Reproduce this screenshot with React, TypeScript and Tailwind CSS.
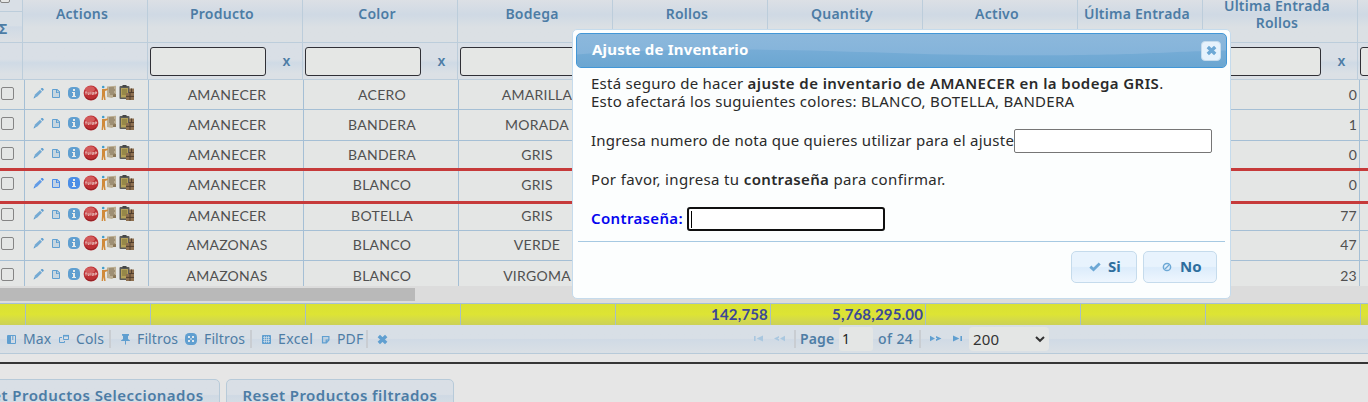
import type { ReactNode } from "react";

type IconName =
  | "pencil" | "doc" | "info" | "stop" | "note" | "stock" | "max" | "cols" | "pin"
  | "clear" | "grid" | "pdf" | "close" | "first" | "prev" | "next" | "last" | "check" | "ban";

const glyphs: Record<IconName, ReactNode> = {
  pencil: (
    <g fill="currentColor">
      <path d="M3 11.5 4 8.6 9 3.8 11 5.8 6 10.8Z" opacity=".85" />
      <path d="m9.6 3.1 1-1c.3-.3.7-.3 1 0l1 1c.3.3.3.7 0 1l-1 1Z" />
      <path d="M3.3 10.3 2.5 12.5 4.7 11.7Z" />
    </g>
  ),
  doc: (
    <g>
      <path d="M3.5 3.5h4.5l2.5 2.5v5.5h-7Z" fill="currentColor" fillOpacity=".22" stroke="currentColor" />
      <path d="M7 3h1.2L11 5.8V7H7Z" fill="currentColor" />
      <path d="M8.5 4.6v1.2h1.3" fill="none" stroke="#e5e6e5" strokeWidth=".8" />
    </g>
  ),
  info: (
    <g>
      <rect x="1" y="1" width="12" height="12" rx="4.5" fill="currentColor" />
      <path d="M6 3h2v2H6ZM5 6h3v4h1v1H5v-1h1V7H5Z" fill="#e8ebea" />
    </g>
  ),
  stop: (
    <g>
      <circle cx="8" cy="8" r="7.4" fill="#bd3034" />
      <ellipse cx="7" cy="4.2" rx="4.8" ry="2.9" fill="#d96a68" opacity=".75" />
      <path d="M2.5 12a7 7 0 0 0 11 0" fill="none" stroke="#8f2226" />
      <path d="M2 7h2M3 7v2.6M5 7v2.4h1.2V7.2M7.8 6.8v2.8M9.2 7v2.4h1.2V7M12 9.6V7M12 7h1.6v1.3h-1.4" fill="none" stroke="#f0d2ce" strokeWidth=".8" />
    </g>
  ),
  note: (
    <g>
      <path d="M6 1.5 15 .8v9.5l-4 2.6-5-1Z" fill="#bcae92" />
      <path d="M8 3h5M8 5h6M8 7h5M9 9h5" stroke="#7b6b50" strokeWidth=".9" />
      <path d="M12 9.5 15 9v3h-3Z" fill="#8a7757" />
      <circle cx="2.2" cy="2" r="1.3" fill="#3f9ccb" />
      <path d="M1 4h2.4l3.4-.6v1.5L4 6v4l.6 5H3.2L2.4 11 2 15H.6L1 10Z" fill="#d08a3a" />
    </g>
  ),
  stock: (
    <g>
      <rect x=".5" y="1" width="10" height="13" rx="1" fill="#5a5b58" />
      <rect x="2" y="3" width="7" height="9.5" fill="#b4a158" />
      <path d="M3 5h5M3 7h5M3 9h4" stroke="#6b6233" strokeWidth=".8" />
      <rect x="3.5" y="0" width="4" height="2.2" fill="#454746" />
      <path d="M10 3.5h5V15H7V8h3Z" fill="#8e7050" />
      <path d="M10 7.5h5M7 11.4h8M11 8v7M12.5 3.5V8" stroke="#4d3b2b" strokeWidth=".9" />
    </g>
  ),
  max: (
    <g>
      <path d="M2.5 2.5h8v8h-8Z" fill="none" stroke="currentColor" />
      <path d="M3 3h3v7H3ZM7.3 3h1v4h-1Z" fill="currentColor" />
    </g>
  ),
  cols: (
    <g fill="none" stroke="currentColor">
      <path d="M5.5 2.5h5v4h-5Z" />
      <path d="M5 2.7h6" strokeWidth="1.6" />
      <path d="M4 4.5H1.5v5h5V8" />
    </g>
  ),
  pin: (
    <g fill="currentColor">
      <path d="M3 1h7v1.6L9 3v3l2 1.4V8H2v-.6L4 6V3L3 2.6Z" />
      <path d="M6 8h1v3.5H6Z" />
    </g>
  ),
  clear: (
    <g>
      <rect x="0" y="0" width="12" height="12" rx="4.2" fill="currentColor" />
      <path d="M3 3h2v2H3ZM7 3h2v2H7ZM3 7h2v2H3ZM7 7h2v2H7ZM5.3 5.3h1.4v1.4H5.3Z" fill="#dfe7ee" />
    </g>
  ),
  grid: (
    <g>
      <rect x="1" y="1" width="9" height="9" rx=".8" fill="currentColor" />
      <path d="M3.5 2v7M5.5 2v7M7.5 2v7M2 3.5h7M2 5.5h7M2 7.5h7" stroke="#dce4eb" strokeWidth=".6" />
    </g>
  ),
  pdf: (
    <path d="M1.5 1.5h6.4v3.6L5.4 7.8H1.5ZM7.8 5H5.2v2.6" fill="currentColor" fillOpacity=".2" stroke="currentColor" strokeWidth="1.2" />
  ),
  close: <path d="M1.8 2 9.2 9M9.2 2 1.8 9" stroke="currentColor" strokeWidth="3.4" />,
  first: <path d="M1 3h1.6v5H1ZM10 2.5v6L3.6 5.5Z" fill="currentColor" />,
  prev: <path d="M12 2.8v5.4L7 5.5ZM6 3 1 5.5 6 8V6.2l-1.5-.7L6 4.8Z" fill="currentColor" />,
  next: <path d="M0 2.8v5.4l5-2.7ZM6 3l5.5 2.5L6 8V6.2l1.5-.7L6 4.8Z" fill="currentColor" />,
  last: <path d="M0 2.5v6l6.4-3ZM7.4 3H9v5H7.4Z" fill="currentColor" />,
  check: <path d="m1.3 5.6 3.2 2.9 6.2-6" fill="none" stroke="currentColor" strokeWidth="2.8" />,
  ban: (
    <g fill="none" stroke="currentColor">
      <circle cx="5" cy="5" r="3.6" strokeWidth="1.5" />
      <path d="M3 7 7 3" strokeWidth="1.2" />
    </g>
  ),
};

function Icon({ name, size, className = "" }: { name: IconName; size: number; className?: string }) {
  return (
    <svg width={size} height={size} viewBox={`0 0 ${size} ${size}`} className={`shrink-0 ${className}`}>
      {glyphs[name]}
    </svg>
  );
}

type Row = { producto: string; color: string; bodega: string; rollos: string; height: string; shift: string; border: string; active?: boolean };

const thin = "border-b border-[#a5bfd5]";
const rows: Row[] = [
  { producto: "AMANECER", color: "ACERO", bodega: "AMARILLA", rollos: "0", height: "h-[30px]", shift: "", border: thin },
  { producto: "AMANECER", color: "BANDERA", bodega: "MORADA", rollos: "1", height: "h-[31px]", shift: "", border: thin },
  { producto: "AMANECER", color: "BANDERA", bodega: "GRIS", rollos: "0", height: "h-[30px]", shift: "-mt-px", border: "border-b-[3px] border-[#c63a3a]" },
  { producto: "AMANECER", color: "BLANCO", bodega: "GRIS", rollos: "0", height: "h-[33px]", shift: "-mt-px", border: "border-b-[3px] border-[#c63a3a]", active: true },
  { producto: "AMANECER", color: "BOTELLA", bodega: "GRIS", rollos: "77", height: "h-[27px]", shift: "-mt-[3px]", border: thin },
  { producto: "AMAZONAS", color: "BLANCO", bodega: "VERDE", rollos: "47", height: "h-[30px]", shift: "-mt-px", border: thin },
  { producto: "AMAZONAS", color: "BLANCO", bodega: "VIRGOMA", rollos: "23", height: "h-[25px]", shift: "", border: "" },
];

const headers = [
  { label: "Actions", width: "w-[125px]", input: false },
  { label: "Producto", width: "w-[155px]", input: true },
  { label: "Color", width: "w-[155px]", input: true },
  { label: "Bodega", width: "w-[155px]", input: true },
  { label: "Rollos", width: "w-[155px]", input: true },
  { label: "Quantity", width: "w-[155px]", input: true },
  { label: "Activo", width: "w-[155px]", input: true },
  { label: "Última Entrada", width: "w-[125px]", input: false },
  { label: "Última Entrada Rollos", width: "w-[155px]", input: true },
  { label: "", width: "w-[155px]", input: true },
];

const totals = [
  { value: "", width: "w-[26px]" },
  { value: "", width: "w-[125px]" },
  { value: "", width: "w-[155px]" },
  { value: "", width: "w-[155px]" },
  { value: "", width: "w-[155px]" },
  { value: "142,758", width: "w-[155px]" },
  { value: "5,768,295.00", width: "w-[155px]" },
  { value: "", width: "w-[155px]" },
  { value: "", width: "w-[125px]" },
  { value: "", width: "w-[155px]" },
];

const line = "border-[#bccddb]";

function HeaderRow() {
  return (
    <div className="flex h-[43px] text-[14px] leading-[17px] font-semibold tracking-[0.24px] text-[#4c7ca5]">
      <div className={`flex w-[23px] shrink-0 flex-col border-r ${line}`}>
        <div className={`h-3 shrink-0 border-b bg-[#d9dfe6] ${line}`}>
          <div className="-mt-[10px] h-[13px] w-[10px] rounded-[2px] border border-[#858585] bg-[#e6e7e6]" />
        </div>
        <div className={`flex h-[31px] items-center border-b bg-linear-to-b from-[#d8dfe6] from-45% via-[#d0dae5] via-50% to-[#dce0e4] ${line}`}>
          <span className="-ml-px pt-[3px] text-[14px] font-bold">Σ</span>
        </div>
      </div>
      {headers.map((h, i) => (
        <div
          key={i}
          className={`flex shrink-0 justify-center border-r border-b bg-linear-to-b from-[#dce0e5] from-0% via-[#cfd9e4] via-35% to-[#dbe0e4] to-65% ${line} ${h.width}`}
        >
          {h.label.endsWith("Entrada Rollos") ? (
            <div className="-mt-[3px] pr-[6px] text-center">Última Entrada<br />Rollos</div>
          ) : (
            <div className="pt-[5px] pr-[6px]">{h.label}</div>
          )}
        </div>
      ))}
    </div>
  );
}

function FilterRow() {
  return (
    <div className="flex h-[37px] text-[14px] font-semibold text-[#4c7ca5]">
      {[{ width: "w-[23px]", input: false }, ...headers].map((h, i) => (
        <div
          key={i}
          className={`flex shrink-0 items-center border-r border-b bg-linear-to-b from-[#d9dfe6] from-45% via-[#cfdae5] via-55% to-[#dbe0e5] to-85% pl-[2px] ${line} ${h.width}`}
        >
          {h.input && (
            <>
              <div className="mt-px h-[29px] w-[116px] rounded-[3px] border border-[#303036] bg-[#e5e7e5]" />
              <span className="ml-[16.5px] pb-px leading-4">x</span>
            </>
          )}
        </div>
      ))}
    </div>
  );
}

const cell = "flex shrink-0 justify-center border-r border-[#a5bfd5]";

function DataRow({ row }: { row: Row }) {
  const text = `flex h-7 items-center ${row.shift}`;
  return (
    <div className={`flex shrink-0 ${row.height} ${row.border}`}>
      <div className="w-[25px] shrink-0 border-r border-[#a5bfd5]">
        <div className={`flex h-[27px] items-center ${row.shift}`}>
          <div className="ml-px h-[13px] w-[13px] rounded-[2px] border border-[#858585]" />
        </div>
      </div>
      <div className="w-[124px] shrink-0 border-r border-[#a5bfd5]">
        <div className={`flex h-[26px] items-center pl-[6px] ${row.shift} ${row.active ? "text-[#4b8ee6]" : "text-[#609fd0]"}`}>
          <Icon name="pencil" size={14} />
          <Icon name="doc" size={14} className="ml-[4px]" />
          <Icon name="info" size={14} className="ml-[4px]" />
          <Icon name="stop" size={16} className="ml-[2px] -mt-px" />
          <Icon name="note" size={16} className="ml-[2px] -mt-px" />
          <Icon name="stock" size={16} className="ml-[2px] -mt-px" />
        </div>
      </div>
      <div className={`w-[155px] pl-[2px] ${cell}`}><span className={text}>{row.producto}</span></div>
      <div className={`w-[155px] pl-[2px] ${cell}`}><span className={text}>{row.color}</span></div>
      <div className={`w-[155px] pl-[2px] ${cell}`}><span className={text}>{row.bodega}</span></div>
      <div className="w-[590px] shrink-0" />
      <div className="flex w-[156px] shrink-0 justify-end border-r border-[#a5bfd5] pr-[2px]"><span className={text}>{row.rollos}</span></div>
    </div>
  );
}

function Separator({ className }: { className: string }) {
  return <div className={`h-[18px] w-[2px] shrink-0 bg-[#c9cdd2] ${className}`} />;
}

function Tool({ name, size, label, className, gap }: { name: IconName; size: number; label: string; className: string; gap: string }) {
  return (
    <div className={`flex shrink-0 items-center whitespace-nowrap ${className}`}>
      <Icon name={name} size={size} className="text-[#609fd0]" />
      <span className={`pb-px ${gap}`}>{label}</span>
    </div>
  );
}

function Pager() {
  return (
    <div className="flex h-[29px] items-center border-b border-[#b7cad9] bg-linear-to-b from-[#d8dfe6] from-48% via-[#d0dae5] via-52% to-[#dae0e5] text-[14px] leading-5 tracking-[0.12px] text-[#4e7da5]">
      <div className="flex w-[752px] shrink-0 items-center">
        <Tool name="max" size={12} label="Max" gap="ml-[6px]" className="ml-[5px] w-[53px]" />
        <Tool name="cols" size={12} label="Cols" gap="ml-[6px]" className="w-[51px]" />
        <Separator className="" />
        <Tool name="pin" size={12} label="Filtros" gap="ml-[6px]" className="ml-[8px] w-[66px]" />
        <Tool name="clear" size={12} label="Filtros" gap="ml-[7px]" className="w-[65px]" />
        <Separator className="" />
        <Tool name="grid" size={11} label="Excel" gap="ml-[6px]" className="ml-[9px] w-[60px] tracking-[0.4px]" />
        <Tool name="pdf" size={9} label="PDF" gap="ml-[7px]" className="w-[45px]" />
        <Separator className="" />
        <Icon name="close" size={11} className="ml-[9px] text-[#609fd0]" />
      </div>
      <Icon name="first" size={12} className="ml-px text-[#a9c7df]" />
      <Icon name="prev" size={13} className="ml-[8px] text-[#a9c7df]" />
      <Separator className="ml-[8px]" />
      <span className="ml-[4px] w-[39px] pb-px font-semibold">Page</span>
      <div className="h-6 w-[34px] rounded-[3px] bg-[#e4e6e5] pt-[2px] pl-[3px] text-[#222]">1</div>
      <span className="ml-[5px] w-[41px] pb-px font-medium tracking-[0.4px]">of 24</span>
      <Separator className="" />
      <Icon name="next" size={12} className="ml-[9px] text-[#609fd0]" />
      <Icon name="last" size={12} className="ml-[11px] text-[#609fd0]" />
      <div className="ml-[4px] flex h-6 w-20 items-center justify-between rounded-[4px] bg-[#e4e6e5] pr-[4px] pb-px pl-1 text-[15px] text-[#333]">
        200
        <svg width="10" height="8" viewBox="0 0 10 8"><path d="m1 2 4 3.8L9 2" fill="none" stroke="#333" strokeWidth="2" /></svg>
      </div>
    </div>
  );
}

function DialogButton({ name, size, label, className, gap }: { name: IconName; size: number; label: string; className: string; gap: string }) {
  return (
    <button className={`flex h-8 items-center rounded-[5px] border border-[#c5dbec] bg-linear-to-b from-[#e8f3fd] from-48% via-[#dcecfb] via-52% to-[#eef6fe] pb-[2px] text-[15px] font-bold text-[#2e6e9e] ${className}`}>
      <Icon name={name} size={size} className="mt-px text-[#6da8d5]" />
      <span className={gap}>{label}</span>
    </button>
  );
}

function Dialog() {
  return (
    <div className="absolute top-[29px] left-[572px] h-[270px] w-[659px] rounded-[5px] border border-[#c5dbec] bg-[#fcfefe] p-[3px] text-[15px] leading-[18px] text-[#2a2a2a]">
      <div className="relative flex h-[35px] items-center justify-between overflow-hidden rounded-[5px] border border-[#4297d7] bg-linear-to-b from-[#8cb8dc] to-[#80b1d9] pr-[5px] pl-[15px]">
        <svg className="absolute inset-0" width="100%" height="100%" viewBox="0 0 650 34" preserveAspectRatio="none">
          <defs>
            <linearGradient id="gloss" x1="0" y1="0" x2="0" y2="1">
              <stop offset="0" stopColor="#76acd6" />
              <stop offset="1" stopColor="#6ba6d1" />
            </linearGradient>
          </defs>
          <path d="M0 21Q60 16 150 16C270 16 330 22 450 22S590 18 650 17V34H0Z" fill="url(#gloss)" />
        </svg>
        <span className="relative pb-[3px] font-bold tracking-[0.19px] text-white">Ajuste de Inventario</span>
        <div className="relative flex h-5 w-5 items-center justify-center rounded-[4px] border border-[#c5dbec] bg-[#e6f2fc] text-[#6da8d5]">
          <Icon name="close" size={11} />
        </div>
      </div>
      <div className="pl-[15px] pt-[6px] tracking-[0.25px] whitespace-nowrap">
        <div>
          Está seguro de hacer <b className="font-semibold tracking-[0.43px]">ajuste de inventario de AMANECER en la bodega GRIS</b>.
        </div>
        <div className="tracking-[0.28px]">Esto afectará los suguientes colores: BLANCO, BOTELLA, BANDERA</div>
        <div className="mt-[18px] flex h-[25px] items-center">
          <span className="w-[423px] pb-px">Ingresa numero de nota que quieres utilizar para el ajuste</span>
          <div className="h-6 w-[198px] rounded-[2px] border border-[#767676] bg-white" />
        </div>
        <div className="mt-[17px] tracking-[0.35px]">
          Por favor, ingresa tu <b className="font-semibold">contraseña</b> para confirmar.
        </div>
        <div className="mt-[19px] flex h-6 items-center">
          <span className="w-[96px] pb-[3px] font-semibold tracking-[0.35px] text-[#0505ef]">Contraseña:</span>
          <div className="flex h-6 w-[198px] items-center rounded-[3px] border-2 border-[#101010] bg-white pl-[2px]">
            <div className="h-[17px] w-px bg-black" />
          </div>
        </div>
      </div>
      <div className="mx-[2px] mt-[10px] flex justify-end gap-[6px] border-t border-[#a6c9e2] pt-[9px] pr-2">
        <DialogButton name="check" size={12} label="Si" gap="ml-[7px]" className="w-[66px] pl-[17px]" />
        <DialogButton name="ban" size={10} label="No" gap="ml-[8px]" className="w-[74px] pl-[18px]" />
      </div>
    </div>
  );
}

function ResetButton({ label }: { label: string }) {
  return (
    <button className="h-8 shrink-0 rounded-[5px] border border-[#b7cad9] bg-linear-to-b from-[#d9dfe6] from-48% via-[#cfd9e4] via-52% to-[#dbe0e5] px-[15.5px] text-[15px] leading-[27px] font-semibold tracking-[0.45px] whitespace-nowrap text-[#4c7ca5]">
      {label}
    </button>
  );
}

export default function App() {
  return (
    <div className="relative h-[402px] w-[1368px] overflow-hidden bg-[#e6e6e6] font-['Noto_Sans',sans-serif]">
      <HeaderRow />
      <FilterRow />
      <div className="h-[206px] bg-[#e4e6e5] font-[Lato,sans-serif] text-[14px] tracking-[0.25px] text-[#505050]">
        {rows.map((row, i) => <DataRow key={i} row={row} />)}
      </div>
      <div className="h-[17px] bg-[#dcdcdc] pt-[2px]">
        <div className="h-[13px] w-[415px] bg-[#b9b9b9]" />
      </div>
      <div className="flex h-[22px] border-t border-[#a5bfd5] bg-linear-to-b from-[#dae233] via-[#dde434] via-50% to-[#ccd156] font-[Lato,sans-serif] text-[15px] leading-5 font-bold tracking-[0.17px] text-[#3c4898]">
        {totals.map((t, i) => (
          <div key={i} className={`shrink-0 border-r border-[#a5bfc8] pr-[2px] text-right ${t.width}`}>{t.value}</div>
        ))}
      </div>
      <Pager />
      <div className="mt-2 h-[2px] bg-[#353535]" />
      <div className="mt-[15px] flex gap-[6px]">
        <div className="flex w-[220px] justify-end"><ResetButton label="Reset Productos Seleccionados" /></div>
        <ResetButton label="Reset Productos filtrados" />
      </div>
      <Dialog />
    </div>
  );
}
